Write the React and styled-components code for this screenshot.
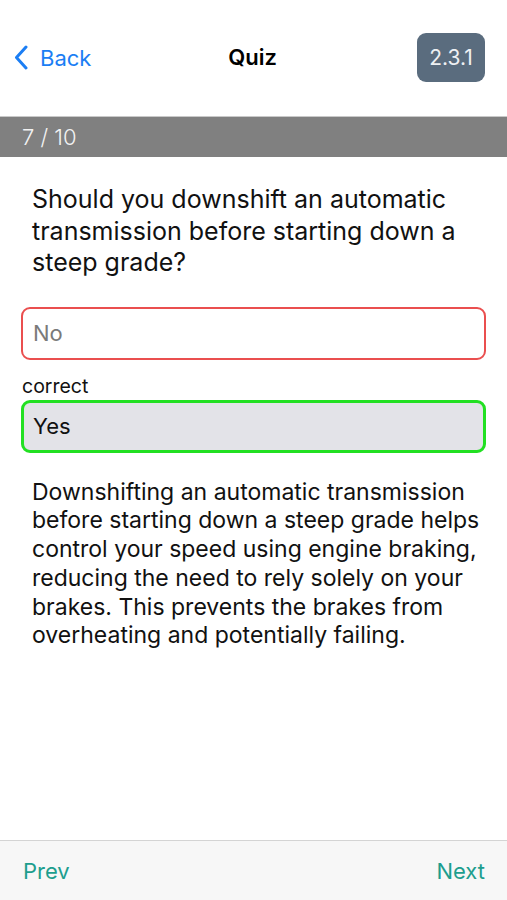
import React from 'react'
import styled, { createGlobalStyle } from 'styled-components'

const GlobalStyle = createGlobalStyle`
  html, body {
    margin: 0;
    padding: 0;
    background: #ffffff;
  }
  body {
    font-family: Inter, "Liberation Sans", Arial, sans-serif;
  }
`

const Screen = styled.div`
  width: 507px;
  height: 900px;
  display: flex;
  flex-direction: column;
  background: #fff;
  overflow: hidden;
`

const Header = styled.div`
  height: 116px;
  display: grid;
  grid-template-columns: 1fr auto 1fr;
  align-items: start;
  padding: 33px 22px 0 14px;
  box-sizing: border-box;
`

const BackButton = styled.div`
  display: flex;
  align-items: center;
  gap: 12px;
  height: 49px;
  color: #1b7ef4;
  font-size: 22px;
`

const Title = styled.div`
  height: 49px;
  line-height: 49px;
  font-size: 22px;
  font-weight: 600;
  color: #000;
  margin-left: 6px;
`

const Badge = styled.div`
  justify-self: end;
  width: 68px;
  height: 49px;
  border-radius: 9px;
  background: #5a6c7e;
  color: #eef0f3;
  font-size: 21px;
  display: flex;
  align-items: center;
  justify-content: center;
`

const ProgressBar = styled.div`
  height: 41px;
  background: #808080;
  border-top: 1px solid #c9c9c9;
  box-sizing: border-box;
  display: flex;
  align-items: center;
  padding-left: 22px;
  color: #f2f2f2;
  font-size: 22px;
  font-weight: 300;
`

const Content = styled.div`
  flex: 1;
  display: flex;
  flex-direction: column;
  padding: 27px 21px 0 21px;
`

const Question = styled.div`
  padding-left: 11px;
  font-size: 25px;
  line-height: 31.5px;
  color: #111;
  white-space: pre-line;
  margin-bottom: 28px;
`

const Answer = styled.div`
  height: 53px;
  box-sizing: border-box;
  border-radius: 9px;
  border: ${p => (p.$correct ? '3px solid #22e022' : '2px solid #ea4f4f')};
  background: ${p => (p.$correct ? '#e3e3e8' : '#fff')};
  color: ${p => (p.$correct ? '#111' : '#7a7a7a')};
  font-size: 22px;
  display: flex;
  align-items: center;
  padding-left: ${p => (p.$correct ? '9px' : '10px')};
`

const Label = styled.div`
  font-size: 19.5px;
  color: #111;
  height: 40px;
  box-sizing: border-box;
  display: flex;
  align-items: flex-end;
  padding: 0 0 2px 1px;
`

const Explanation = styled.div`
  padding-left: 11px;
  margin-top: 25px;
  font-size: 23px;
  line-height: 28.8px;
  color: #111;
  white-space: pre-line;
`

const Footer = styled.div`
  height: 60px;
  border-top: 1px solid #d4d4d4;
  background: #f7f7f7;
  display: flex;
  align-items: center;
  justify-content: space-between;
  padding: 0 22px 0 23px;
  box-sizing: border-box;
`

const NavLink = styled.div`
  color: #1d9e8e;
  font-size: 22px;
`

const Chevron = () => (
  <svg width="14" height="25" viewBox="0 0 14 25">
    <path d="M12 2 L2.5 12.5 L12 23" fill="none" stroke="#1b7ef4" strokeWidth="3" strokeLinecap="round" strokeLinejoin="round" />
  </svg>
)

const App = () => {
  return (
    <Screen>
      <GlobalStyle />
      <Header>
        <BackButton>
          <Chevron />
          <span>Back</span>
        </BackButton>
        <Title>Quiz</Title>
        <Badge>2.3.1</Badge>
      </Header>
      <ProgressBar>7 / 10</ProgressBar>
      <Content>
        <Question>
          {'Should you downshift an automatic\ntransmission before starting down a\nsteep grade?'}
        </Question>
        <Answer>No</Answer>
        <Label>correct</Label>
        <Answer $correct>Yes</Answer>
        <Explanation>
          {'Downshifting an automatic transmission\nbefore starting down a steep grade helps\ncontrol your speed using engine braking,\nreducing the need to rely solely on your\nbrakes. This prevents the brakes from\noverheating and potentially failing.'}
        </Explanation>
      </Content>
      <Footer>
        <NavLink>Prev</NavLink>
        <NavLink>Next</NavLink>
      </Footer>
    </Screen>
  )
}

export default App
